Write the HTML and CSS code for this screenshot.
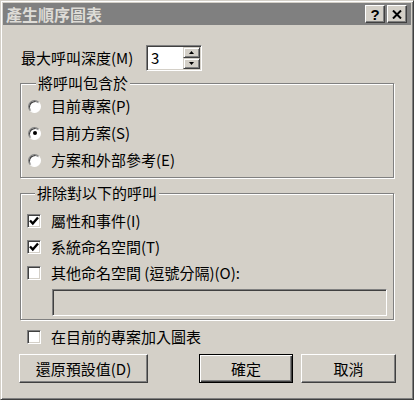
FILE: index.html
```html
<!DOCTYPE html>
<html lang="zh-Hant">
  <head>
    <meta charset="UTF-8">
    <meta name="viewport" content="width=device-width,initial-scale=1.0">
    <title>產生順序圖表</title>
    <link rel="stylesheet" href="styles.css">
  </head>
  <body>
    <div class="window">
      <div class="titlebar">
        <span class="title">產生順序圖表</span>
        <div class="tbtns">
          <span class="tbtn">?</span>
          <span class="tbtn"><svg width="10" height="9" viewBox="0 0 10 9"><path d="M1 0.5L9 8.5M9 0.5L1 8.5" stroke="#000" stroke-width="2" fill="none"/></svg></span>
        </div>
      </div>
      <div class="content">
        <div class="depth">
          <label class="depth-label">最大呼叫深度(M)</label>
          <div class="spin sunken">
            <span class="spin-val">3</span>
            <div class="spin-btns">
              <span class="spin-btn"><svg width="5" height="3" viewBox="0 0 5 3"><path d="M2.5 0L5 3H0z" fill="#000"/></svg></span>
              <span class="spin-btn"><svg width="5" height="3" viewBox="0 0 5 3"><path d="M0 0H5L2.5 3z" fill="#000"/></svg></span>
            </div>
          </div>
        </div>

        <fieldset class="group g1">
          <legend>將呼叫包含於</legend>
          <div class="opt"><span class="radio"></span>目前專案(P)</div>
          <div class="opt"><span class="radio on"></span>目前方案(S)</div>
          <div class="opt"><span class="radio"></span>方案和外部參考(E)</div>
        </fieldset>

        <fieldset class="group g2">
          <legend>排除對以下的呼叫</legend>
          <div class="opt"><span class="check sunken"><svg width="10" height="10" viewBox="0 0 10 10"><path d="M1 4.5L3.8 7.5L9 1.5" stroke="#000" stroke-width="2.4" fill="none"/></svg></span>屬性和事件(I)</div>
          <div class="opt"><span class="check sunken"><svg width="10" height="10" viewBox="0 0 10 10"><path d="M1 4.5L3.8 7.5L9 1.5" stroke="#000" stroke-width="2.4" fill="none"/></svg></span>系統命名空間(T)</div>
          <div class="opt"><span class="check sunken"></span>其他命名空間 (逗號分隔)(O):</div>
          <div class="ns-input sunken"></div>
        </fieldset>

        <div class="opt add-row"><span class="check sunken"></span>在目前的專案加入圖表</div>

        <div class="buttons">
          <button class="btn btn-reset">還原預設值(D)</button>
          <button class="btn btn-ok">確定</button>
          <button class="btn btn-cancel">取消</button>
        </div>
      </div>
    </div>
  </body>
</html>
```

FILE: styles.css
```css
:root{--face:#d4d0c8;--shadow:#808080;--dark:#404040;--light:#fff}
*{box-sizing:border-box}
body{margin:0;background:var(--face)}
.window{width:414px;height:400px;background:var(--face);border:1px solid;border-color:var(--face) var(--dark) var(--dark) var(--face);box-shadow:inset 1px 1px var(--light),inset -1px -1px var(--shadow);padding:2px;display:flex;flex-direction:column;font-family:"Noto Sans CJK TC",sans-serif;font-size:15px;color:#000}
.titlebar{height:22px;background:var(--shadow);display:flex;align-items:center;padding:0 4px 0 3px}
.title{flex:1;color:#dedcd7;font-weight:bold;font-size:16px;line-height:22px}
.tbtns{display:flex;gap:2px}
.tbtn{width:20px;height:18px;background:var(--face);border:1px solid;border-color:var(--light) var(--dark) var(--dark) var(--light);box-shadow:inset -1px -1px var(--shadow);display:grid;place-items:center;font:bold 15px "Liberation Sans",sans-serif;line-height:1}
.content{padding:0 17px;display:flex;flex-direction:column}

.sunken{border:1px solid;border-color:var(--shadow) var(--light) var(--light) var(--shadow);box-shadow:inset 1px 1px var(--dark),inset -1px -1px var(--face)}

.depth{display:flex;align-items:center;height:26px;margin-top:20px}
.depth-label{width:126px;padding-left:1px;line-height:18px}
.spin{width:56px;height:26px;background:#fff;display:flex}
.spin-val{flex:1;padding-left:4px;line-height:24px}
.spin-btns{width:18px;padding:1px 1px 1px 0;display:flex;flex-direction:column}
.spin-btn{flex:1;background:var(--face);border:1px solid;border-color:var(--face) var(--dark) var(--dark) var(--face);box-shadow:inset 1px 1px var(--light),inset -1px -1px var(--shadow);display:grid;place-items:center}

.group{margin:0;padding:0;min-width:0;border:1px solid var(--shadow);box-shadow:inset 1px 1px var(--light),1px 1px var(--light)}
.group legend{margin-left:8px;padding:0 2px;line-height:18px;background:var(--face)}
.g1{margin-top:3px;padding:1px 0 4px 7px;display:flex;flex-direction:column;gap:1px}
.g2{margin-top:6px;padding:6px 0 3px 6px}
.opt{height:26px;display:flex;align-items:center;line-height:18px}
.radio{width:13px;height:13px;margin-right:10px;border-radius:50%;background:#fff;border:1px solid;border-color:var(--shadow) var(--light) var(--light) var(--shadow);box-shadow:inset 1px 1px var(--dark);display:grid;place-items:center}
.radio.on::after{content:"";width:4px;height:4px;border-radius:50%;background:#000}
.check{width:14px;height:14px;margin-right:10px;background:#fff;display:grid;place-items:center}
.ns-input{margin:3px 0 0 25px;width:335px;height:27px;background:var(--face)}

.add-row{margin-top:7px;padding-left:7px;height:20px}

.buttons{display:flex;gap:8px;margin:7px -2px 0 -1px}
.btn{height:29px;padding:0;font:15px "Noto Sans CJK TC",sans-serif;color:#000;background:var(--face);border:1px solid;border-color:var(--light) var(--dark) var(--dark) var(--light);box-shadow:inset -1px -1px var(--shadow)}
.btn-reset{width:129px}
.btn-ok{width:94px;margin-left:auto;border-color:#000;box-shadow:inset 1px 1px var(--light),inset -1px -1px var(--dark),inset -2px -2px var(--shadow)}
.btn-cancel{width:95px}
```
